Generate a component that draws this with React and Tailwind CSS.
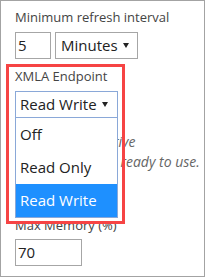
function Arrow() {
  return (
    <svg width="6" height="5" viewBox="0 0 6 5" className="shrink-0">
      <path d="M0 0 H6 L3 5 Z" fill="#222" />
    </svg>
  )
}

export default function App() {
  const options = ["Off", "Read Only", "Read Write"]
  return (
    <div className="relative w-[205px] h-[277px] border border-[#a3a3a3] bg-white font-['Open_Sans',sans-serif] text-[#444]">
      <div className="pl-[14px] pt-[7px]">
        <div className="text-[13px] leading-[18px]">Minimum refresh interval</div>
        <div className="mt-[6px] flex gap-[4px] text-[15px] text-[#222]">
          <div className="w-[36px] h-[27px] border border-[#a6a6a6] pl-[2px] flex items-center">5</div>
          <div className="w-[83px] h-[27px] border border-[#a6a6a6] pl-[5px] pr-[8px] flex items-center justify-between">
            <span>Minutes</span>
            <Arrow />
          </div>
        </div>

        <div className="mt-[8px] text-[13px] leading-[18px]">XMLA Endpoint</div>
        <div className="relative mt-[6px] w-[103px]">
          <div className="h-[27px] border border-[#8aa8d8] pl-[4px] pr-[9px] flex items-center justify-between text-[15px] text-[#222]">
            <span>Read Write</span>
            <Arrow />
          </div>
          {/* open dropdown list */}
          <div className="absolute top-full left-0 w-full z-10 bg-white border-x border-b border-[#8aa8d8] text-[15px]">
            {options.map((o) => (
              <div
                key={o}
                className={
                  "h-[33px] pl-[4px] flex items-center " +
                  (o === "Read Write" ? "bg-[#1e90ff] text-white" : "text-[#222]")
                }
              >
                {o}
              </div>
            ))}
          </div>
        </div>

        <p className="mt-[14px] text-[14px] leading-[20px] italic text-[#666] whitespace-nowrap">
          Capacity is effective
          <br />
          when the data is ready to use.
        </p>

        <div className="mt-[44px] text-[13px] leading-[18px]">Max Memory (%)</div>
        <div className="mt-[5px] w-[67px] h-[27px] border border-[#a6a6a6] pl-[2px] flex items-center text-[15px] text-[#222]">70</div>
      </div>

      {/* annotation highlight */}
      <div className="absolute left-[5px] top-[63px] w-[119px] h-[160px] border-[3px] border-[#f64444] z-20 pointer-events-none" />
    </div>
  )
}
